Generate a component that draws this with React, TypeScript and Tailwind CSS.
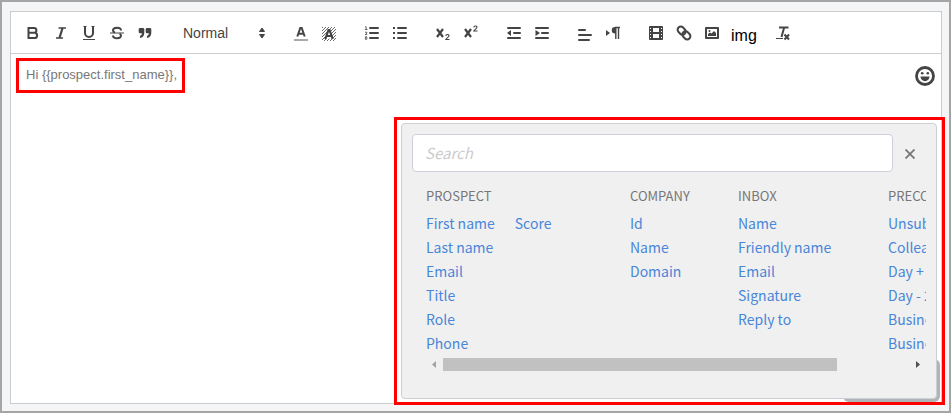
import React, { useState } from 'react';

type IconButtonProps = {
  label: string;
  children: React.ReactNode;
};

const IconButton: React.FC<IconButtonProps> = ({ label, children }) => (
  <button
    type="button"
    aria-label={label}
    title={label}
    className="flex h-6 w-7 items-center justify-center text-[#444]"
  >
    <svg viewBox="0 0 18 18" className="h-[18px] w-[18px] shrink-0" fill="none" stroke="currentColor" strokeWidth="2">
      {children}
    </svg>
  </button>
);

const Group: React.FC<{ children: React.ReactNode }> = ({ children }) => (
  <div className="flex items-center">{children}</div>
);

const Toolbar: React.FC = () => (
  <div className="flex flex-wrap items-center gap-x-[15px] border-b border-[#ccc] px-2 pt-[9px] pb-2">
    <Group>
      <IconButton label="Bold">
        <path d="M4.500 4h5.500a2.400 2.400 0 0 1 0 4.800H4.500zM4.500 8.800h6a2.600 2.600 0 0 1 0 5.200h-6z" />
      </IconButton>
      <IconButton label="Italic">
        <path d="M6.500 4h7.500M4 14h7" strokeWidth="1.600" />
        <path d="M10.600 4 7.400 14" strokeWidth="2.200" />
      </IconButton>
      <IconButton label="Underline">
        <path d="M5 2.500v6.500a4 4 0 0 0 8 0V2.500" />
        <path d="M3 15.500h12" strokeWidth="1" />
        <path d="M3.500 2.500h3M11.500 2.500h3" strokeWidth="1" />
      </IconButton>
      <IconButton label="Strike">
        <path d="M13 6.500C13 4.500 11.500 3.800 9 3.800S5 4.800 5 6.500c0 1 .6 1.700 2 2M5 11.500c0 2 1.500 2.800 4 2.800s4-.9 4-2.700c0-1-.5-1.600-1.500-2" />
        <path d="M2 9h14" strokeWidth="1" />
      </IconButton>
      <IconButton label="Quote">
        <path
          stroke="none"
          fill="currentColor"
          d="M4 4h3q1.300 0 1.300 1.300V9Q8 13.500 4 14v-2q1.800-.5 2-2.700H4Q2.700 9.300 2.700 8V5.300Q2.700 4 4 4zM11 4h3q1.300 0 1.300 1.300V9q-.3 4.500-4.300 5v-2q1.800-.5 2-2.700h-2Q9.700 9.300 9.700 8V5.300Q9.700 4 11 4z"
        />
      </IconButton>
    </Group>

    <button
      type="button"
      className="flex h-6 w-[98px] items-center justify-between pr-[5px] pl-[9px] text-sm text-[#444]"
    >
      Normal
      <svg viewBox="0 0 10 14" className="h-[14px] w-[10px]" fill="currentColor">
        <path d="M5 2 7.500 5.500h-5zM5 12 2.500 8.500h5z" stroke="currentColor" strokeWidth="1" strokeLinejoin="round" />
      </svg>
    </button>

    <Group>
      <IconButton label="Text color">
        <path d="M5.300 12.500 8.300 4h1.400l3 8.500M6.500 9.800h5" strokeWidth="2" />
        <path d="M2 16h14" stroke="#aaa" />
      </IconButton>
      <IconButton label="Background color">
        <defs>
          <pattern id="hatch" width="3" height="3" patternUnits="userSpaceOnUse">
            <path d="M0 3 3 0M-1 1 1-1M2 4 4 2" stroke="#444" strokeWidth="0.8" />
          </pattern>
        </defs>
        <path d="M2 3h14v14H2z" fill="url(#hatch)" stroke="none" />
        <path d="M5.500 14 9 5.500l3.500 8.500z" fill="#fff" stroke="#fff" strokeWidth="1" />
        <path d="M5.300 15 8.500 6h1l3.200 9M6.500 12h5" strokeWidth="2.200" />
      </IconButton>
    </Group>

    <Group>
      <IconButton label="Ordered list">
        <path d="M7 4h8M7 9h8M7 14h8" strokeLinecap="round" />
        <path
          d="M2 2.800h1.200v3M1.800 5.500h2.600M2 8.200h1.900v1L2.200 10.500h2M2.400 12.700h1.400v2.600H2.400z"
          strokeWidth="0.800"
        />
      </IconButton>
      <IconButton label="Bullet list">
        <path d="M7 4h8M7 9h8M7 14h8" strokeLinecap="round" />
        <path d="M2 4h2M2 9h2M2 14h2" strokeWidth="1.800" />
      </IconButton>
    </Group>

    <Group>
      <IconButton label="Subscript">
        <path d="m3 5 6 8M9 5l-6 8" strokeWidth="2.200" />
        <path d="M11.800 12c0-2 3.200-2 3.200-.2 0 1.200-2.700 2.200-3.200 3.700h3.700" strokeWidth="1.100" />
      </IconButton>
      <IconButton label="Superscript">
        <path d="m3 5 6 8M9 5l-6 8" strokeWidth="2.200" />
        <path d="M11.800 3.500c0-2 3.200-2 3.200-.2 0 1.200-2.700 2.200-3.200 3.700h3.700" strokeWidth="1.100" />
      </IconButton>
    </Group>

    <Group>
      <IconButton label="Outdent">
        <path d="M3 4h12M9 9h6M3 14h12" strokeLinecap="round" />
        <path d="M6 6v6L2 9zM6 9h2" fill="currentColor" stroke="none" />
      </IconButton>
      <IconButton label="Indent">
        <path d="M3 4h12M9 9h6M3 14h12" strokeLinecap="round" />
        <path d="M2.500 6v6l4.500-3z" fill="currentColor" stroke="none" />
      </IconButton>
    </Group>

    <Group>
      <IconButton label="Align">
        <path d="M3 6h6M3 11h12M3 16h10" strokeLinecap="round" />
      </IconButton>
      <IconButton label="Direction">
        <path d="M2 6v6l4-3z" fill="currentColor" stroke="none" />
        <path d="M16 3.500h-5M11.800 3v12M14.500 3v12" strokeWidth="1.400" />
        <path d="M12 3h-1a3 3 0 0 0 0 6.500h1z" fill="currentColor" stroke="none" />
      </IconButton>
    </Group>

    <Group>
      <IconButton label="Video">
        <path
          d="M3 2h12a1 1 0 0 1 1 1v12a1 1 0 0 1-1 1H3a1 1 0 0 1-1-1V3a1 1 0 0 1 1-1z"
          fill="currentColor"
          stroke="none"
        />
        <path
          d="M6 4h6v4H6zM6 10h6v4H6zM3 4h1v1H3zM3 7h1v1H3zM3 10h1v1H3zM3 13h1v1H3zM14 4h1v1h-1zM14 7h1v1h-1zM14 10h1v1h-1zM14 13h1v1h-1z"
          fill="#fff"
          stroke="none"
        />
      </IconButton>
      <IconButton label="Link">
        <g transform="rotate(45 9 9)">
          <rect x="1.300" y="5.800" width="8.700" height="6.400" rx="3.200" />
          <rect x="8" y="5.800" width="8.700" height="6.400" rx="3.200" />
        </g>
      </IconButton>
      <IconButton label="Image">
        <path d="M3 4h12v10H3z" strokeLinejoin="round" />
        <path d="M5 12v-2l2-1.500 1.500 1L11 7l2 2v3z" fill="currentColor" stroke="none" />
        <circle cx="6.500" cy="7" r="1" fill="currentColor" stroke="none" />
      </IconButton>
      <button type="button" className="flex h-6 w-7 items-center pt-1.5 pl-[5px] text-base text-black">
        img
      </button>
    </Group>

    <Group>
      <IconButton label="Clear formatting">
        <path d="M5 3.500h9.500" />
        <path d="M10 4 7.500 13" />
        <path d="M2 14.500h7" strokeWidth="1" />
        <path d="m10.500 10.500 4.500 5M15 10.500l-4.500 5" />
      </IconButton>
    </Group>
  </div>
);

type Section = {
  title: string;
  width: string;
  columns: string[][];
};

const sections: Section[] = [
  {
    title: 'PROSPECT',
    width: 'w-[204px]',
    columns: [['First name', 'Last name', 'Email', 'Title', 'Role', 'Phone'], ['Score']],
  },
  { title: 'COMPANY', width: 'w-[108px]', columns: [['Id', 'Name', 'Domain']] },
  { title: 'INBOX', width: 'w-[150px]', columns: [['Name', 'Friendly name', 'Email', 'Signature', 'Reply to']] },
  {
    title: 'PRECONFIGURED',
    width: 'w-[130px]',
    columns: [['Unsubscribe', 'Colleague', 'Day + 2', 'Day - 2', 'Business day +', 'Business day -']],
  },
];

const VariablePicker: React.FC = () => {
  const [search, setSearch] = useState('');

  return (
    <div className="relative rounded border border-[#ccd0d4] bg-[#f0f0f0] px-2.5 pt-2.5 pb-[27px] font-['Noto_Sans_CJK_SC',sans-serif]">
      <div className="flex items-center">
        <input
          type="text"
          aria-label="Search"
          placeholder="Search"
          value={search}
          onChange={(e) => setSearch(e.target.value)}
          className="h-[38px] min-w-0 flex-1 rounded border border-[#ccd0d8] bg-white px-3 pb-0.5 text-[15px] text-[#444] placeholder:text-[#ccc] placeholder:italic"
        />
        <button type="button" aria-label="Close" className="flex h-8 w-[33px] items-center justify-center pt-0.5 text-[#777]">
          <svg viewBox="0 0 10 10" className="h-2.5 w-2.5" stroke="currentColor" strokeWidth="1.800">
            <path d="m.5.5 9 9M9.500.5l-9 9" />
          </svg>
        </button>
      </div>

      <div className="ml-3.5 overflow-hidden pt-[13px]">
        <div className="flex">
          {sections.map((section) => (
            <div key={section.title} className={`shrink-0 ${section.width}`}>
              <h3 className="mb-1 text-[13px] leading-[22px] text-[#777]">{section.title}</h3>
              <div className="flex gap-5">
                {section.columns.map((items, i) => (
                  <ul key={i}>
                    {items.map((item) => (
                      <li key={item} className="h-6 text-sm leading-6 whitespace-nowrap">
                        <a href="#" className="text-[#4a86d8]">
                          {item}
                        </a>
                      </li>
                    ))}
                  </ul>
                ))}
              </div>
            </div>
          ))}
        </div>
      </div>

      <div className="mt-[3px] ml-3.5 flex h-[13px] items-center">
        <svg viewBox="0 0 17 13" className="h-[13px] w-[17px]" fill="#a3a3a3">
          <path d="M10 3v7L6 6.500z" />
        </svg>
        <div className="flex h-full flex-1">
          <div className="w-11/13 bg-[#c1c1c1]" />
        </div>
        <svg viewBox="0 0 17 13" className="h-[13px] w-[17px]" fill="#505050">
          <path d="M7 3v7l4-3.500z" />
        </svg>
      </div>
    </div>
  );
};

const App: React.FC = () => {
  return (
    <div className="flex min-h-screen flex-col border-2 border-[#a5a5a5] bg-[#f4f5f7] pt-[9px] pr-[7px] pb-[7px] pl-2 font-['Liberation_Sans',sans-serif]">
      <div className="relative flex flex-1 flex-col border border-[#ccc] bg-white">
        <Toolbar />

        <div className="flex min-h-[340px] items-start justify-between pt-1 pr-1.5 pl-[5px]">
          <p className="border-3 border-[#f00] pt-[5px] pr-[5px] pb-[7px] pl-[7px] text-[13px] leading-[17px] text-[#777]">
            {'Hi {{prospect.first_name}},'}
          </p>
          <button type="button" aria-label="Emoji" className="mt-2 text-[#444]">
            <svg viewBox="0 0 20 20" className="h-5 w-5" fill="none" stroke="currentColor">
              <circle cx="10" cy="10" r="8.500" strokeWidth="2.800" />
              <path d="M5.500 10.500h9a4.500 4.700 0 0 1-9 0z" fill="currentColor" stroke="none" />
              <circle cx="7.200" cy="7.300" r="1.300" fill="currentColor" stroke="none" />
              <circle cx="12.800" cy="7.300" r="1.300" fill="currentColor" stroke="none" />
            </svg>
          </button>
        </div>

        <div className="absolute -right-1 -bottom-0.5 w-[551px] border-3 border-[#f00] pt-[3px] pr-[5px] pb-[3px] pl-1">
          <div className="absolute right-0.5 bottom-0 h-[43px] w-[97px] rounded-md bg-[#b0b4b9]" />
          <VariablePicker />
        </div>
      </div>
    </div>
  );
};

export default App;
